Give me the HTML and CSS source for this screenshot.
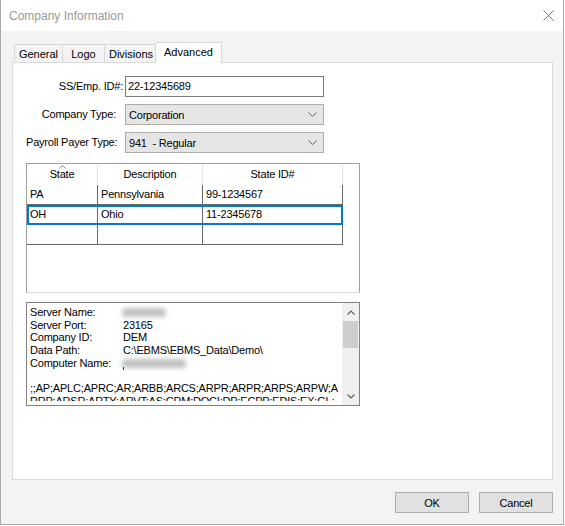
FILE: index.html
```html
<!DOCTYPE html>
<html lang="en">
<head>
    <meta charset="UTF-8">
    <meta name="viewport" content="width=device-width, initial-scale=1.0">
    <title>Company Information</title>
    <link rel="stylesheet" href="styles.css">
</head>
<body>
    <div class="window">
        <div class="titlebar">
            <span class="title">Company Information</span>
            <svg class="close-icon" width="11" height="11" viewBox="0 0 11 11">
                <path d="M0.5 0.5 L10.5 10.5 M10.5 0.5 L0.5 10.5" stroke="#7a7a7a" stroke-width="1" fill="none"/>
            </svg>
        </div>

        <div class="dialog">
            <div class="tabs">
                <div class="tab tab-general">General</div>
                <div class="tab tab-logo">Logo</div>
                <div class="tab tab-divisions">Divisions</div>
                <div class="tab tab-advanced active">Advanced</div>
            </div>

            <div class="panel">
                <div class="form-row">
                    <label class="field-label label-id">SS/Emp. ID#:</label>
                    <div class="textbox">22-12345689</div>
                </div>
                <div class="form-row">
                    <label class="field-label">Company Type:</label>
                    <div class="combo">
                        <span>Corporation</span>
                        <svg class="combo-arrow" width="9" height="5" viewBox="0 0 9 5">
                            <path d="M0.5 0.5 L4.5 4.5 L8.5 0.5" stroke="#606060" stroke-width="1" fill="none"/>
                        </svg>
                    </div>
                </div>
                <div class="form-row">
                    <label class="field-label">Payroll Payer Type:</label>
                    <div class="combo">
                        <span>941&nbsp; - Regular</span>
                        <svg class="combo-arrow" width="9" height="5" viewBox="0 0 9 5">
                            <path d="M0.5 0.5 L4.5 4.5 L8.5 0.5" stroke="#606060" stroke-width="1" fill="none"/>
                        </svg>
                    </div>
                </div>

                <div class="grid">
                    <div class="grid-row grid-head">
                        <div class="cell col-state">
                            <svg class="sort-arrow" width="7" height="4" viewBox="0 0 7 4">
                                <path d="M0.5 3.5 L3.5 0.5 L6.5 3.5" stroke="#8a8a8a" stroke-width="1" fill="none"/>
                            </svg>
                            State
                        </div>
                        <div class="cell col-desc">Description</div>
                        <div class="cell col-id">State ID#</div>
                    </div>
                    <div class="grid-row">
                        <div class="cell col-state">PA</div>
                        <div class="cell col-desc">Pennsylvania</div>
                        <div class="cell col-id">99-1234567</div>
                    </div>
                    <div class="grid-row selected">
                        <div class="cell col-state">OH</div>
                        <div class="cell col-desc">Ohio</div>
                        <div class="cell col-id">11-2345678</div>
                    </div>
                    <div class="grid-row">
                        <div class="cell col-state"></div>
                        <div class="cell col-desc"></div>
                        <div class="cell col-id"></div>
                    </div>
                </div>

                <div class="memo">
                    <div class="memo-text">
                        <div class="memo-line"><span class="memo-key">Server Name:</span><span class="blurred blur-server"></span></div>
                        <div class="memo-line"><span class="memo-key">Server Port:</span>23165</div>
                        <div class="memo-line"><span class="memo-key">Company ID:</span>DEM</div>
                        <div class="memo-line"><span class="memo-key">Data Path:</span>C:\EBMS\EBMS_Data\Demo\</div>
                        <div class="memo-line"><span class="memo-key">Computer Name:</span><span class="blurred blur-computer"></span><span class="caret-mark"></span></div>
                        <div class="memo-line">&nbsp;</div>
                        <div class="memo-line">;;AP;APLC;APRC;AR;ARBB;ARCS;ARPR;ARPR;ARPS;ARPW;A</div>
                        <div class="memo-line">RRP;ARSR;ARTY;ARVT;AS;CRM;DOCI;DP;ECPP;EDIS;EX;GL;</div>
                    </div>
                    <div class="scrollbar">
                        <div class="scroll-btn">
                            <svg width="8" height="5" viewBox="0 0 8 5">
                                <path d="M0.5 4.5 L4 1 L7.5 4.5" stroke="#606060" stroke-width="1.2" fill="none"/>
                            </svg>
                        </div>
                        <div class="scroll-thumb"></div>
                        <div class="scroll-track"></div>
                        <div class="scroll-btn">
                            <svg width="8" height="5" viewBox="0 0 8 5">
                                <path d="M0.5 0.5 L4 4 L7.5 0.5" stroke="#606060" stroke-width="1.2" fill="none"/>
                            </svg>
                        </div>
                    </div>
                </div>
            </div>

            <div class="buttons">
                <button class="btn">OK</button>
                <button class="btn">Cancel</button>
            </div>
        </div>
    </div>
</body>
</html>
```

FILE: styles.css
```css
html, body {
    margin: 0;
    padding: 0;
    background-color: #fff;
}

body {
    font-family: "Liberation Sans", Arial, sans-serif;
    font-size: 11px;
    letter-spacing: -0.2px;
    color: #000;
}

.window {
    box-sizing: border-box;
    width: 564px;
    height: 525px;
    border: 1px solid #a9a9a9;
    border-top: none;
    display: flex;
    flex-direction: column;
    background-color: #f3f3f3;
}

.titlebar {
    height: 31px;
    background-color: #fff;
    display: flex;
    align-items: center;
    justify-content: space-between;
    padding: 0 8px 0 8px;
}

.title {
    font-size: 12px;
    letter-spacing: 0;
    color: #999;
    margin-top: 1px;
}

.close-icon {
    margin-right: 1px;
}

.dialog {
    flex: 1;
    display: flex;
    flex-direction: column;
    padding: 11px 10px 0 11px;
}

/* tabs */
.tabs {
    display: flex;
    align-items: flex-end;
    height: 20px;
    margin-left: 2px;
}

.tab {
    box-sizing: border-box;
    height: 18px;
    line-height: 18px;
    text-align: center;
    border: 1px solid #d9d9d9;
    border-bottom: none;
    background-color: #f3f3f3;
    margin-left: -1px;
    letter-spacing: 0;
}

.tab-general {
    width: 49px;
    margin-left: 0;
}

.tab-logo {
    width: 43px;
}

.tab-divisions {
    width: 54px;
}

.tab.active {
    width: 67px;
    height: 21px;
    line-height: 18px;
    margin-left: -3px;
    margin-bottom: -1px;
    background-color: #fff;
    position: relative;
    z-index: 1;
}

.panel {
    box-sizing: border-box;
    height: 418px;
    border: 1px solid #d9d9d9;
    background-color: #fff;
    padding: 13px 0 0 13px;
}

/* fields */
.form-row {
    display: flex;
    height: 21px;
    margin-bottom: 7px;
}

.field-label {
    box-sizing: border-box;
    width: 99px;
    padding-right: 9px;
    text-align: right;
    line-height: 21px;
    white-space: nowrap;
}

.field-label.label-id {
    padding-right: 2px;
}

.textbox {
    box-sizing: border-box;
    width: 199px;
    height: 21px;
    border: 1px solid #7a7a7a;
    padding-left: 2px;
    line-height: 19px;
}

.combo {
    box-sizing: border-box;
    width: 199px;
    height: 21px;
    border: 1px solid #adadad;
    background-color: #e5e5e5;
    padding: 0 6px 0 3px;
    display: flex;
    align-items: center;
    justify-content: space-between;
    line-height: 19px;
}

.combo span {
    margin-top: 1px;
}

/* state grid */
.grid {
    box-sizing: border-box;
    width: 334px;
    height: 130px;
    margin-top: 10px;
    border: 1px solid #a0a0a0;
    border-bottom-color: #dcdcdc;
}

.grid-row {
    display: flex;
    height: 20px;
    width: 316px;
}

.cell {
    box-sizing: border-box;
    height: 20px;
    line-height: 19px;
    padding-left: 3px;
    border-right: 1px solid #696969;
    border-bottom: 1px solid #696969;
    white-space: nowrap;
}

.col-state {
    width: 71px;
}

.col-desc {
    width: 105px;
}

.col-id {
    width: 140px;
}

.grid-head {
    height: 21px;
}

.grid-head .cell {
    height: 21px;
    line-height: 21px;
    padding-left: 0;
    text-align: center;
    border-right-color: #e5e5e5;
    border-bottom: none;
    position: relative;
}

.sort-arrow {
    position: absolute;
    top: 1px;
    left: 32px;
}

.grid-row.selected {
    outline: 2px solid #0078d7;
    outline-offset: -2px;
    position: relative;
}

/* info memo */
.memo {
    box-sizing: border-box;
    width: 334px;
    height: 104px;
    margin-top: 9px;
    border: 1px solid #828282;
    display: flex;
    align-items: flex-start;
}

.memo-text {
    box-sizing: border-box;
    flex: 1;
    height: 98px;
    overflow: hidden;
    padding: 3px 0 0 3px;
}

.memo-line {
    height: 12.7px;
    line-height: 12.7px;
    white-space: nowrap;
    display: flex;
    align-items: center;
    position: relative;
}

.memo-key {
    width: 93px;
    flex-shrink: 0;
}

.blurred {
    display: inline-block;
    height: 9px;
    margin-left: -1px;
    background-color: #c2c2c2;
    border-radius: 4px;
    filter: blur(2px);
}

.blur-server {
    width: 44px;
}

.blur-computer {
    width: 64px;
}

.caret-mark {
    position: absolute;
    left: 93px;
    top: 10px;
    width: 1px;
    height: 3px;
    background-color: #333;
}

.scrollbar {
    align-self: stretch;
    width: 17px;
    background-color: #f0f0f0;
    display: flex;
    flex-direction: column;
}

.scroll-btn {
    height: 17px;
    display: flex;
    align-items: center;
    justify-content: center;
}

.scroll-btn:first-child {
    padding-top: 1px;
}

.scroll-thumb {
    height: 27px;
    margin: 0 1px;
    background-color: #cdcdcd;
}

.scroll-track {
    flex: 1;
}

/* buttons */
.buttons {
    display: flex;
    justify-content: flex-end;
    gap: 10px;
    margin-top: 12px;
}

.btn {
    box-sizing: border-box;
    width: 74px;
    height: 21px;
    border: 1px solid #adadad;
    background-color: #e1e1e1;
    font-family: "Liberation Sans", Arial, sans-serif;
    font-size: 11px;
    letter-spacing: -0.2px;
    color: #000;
    padding: 0;
    border-radius: 0;
}
```
